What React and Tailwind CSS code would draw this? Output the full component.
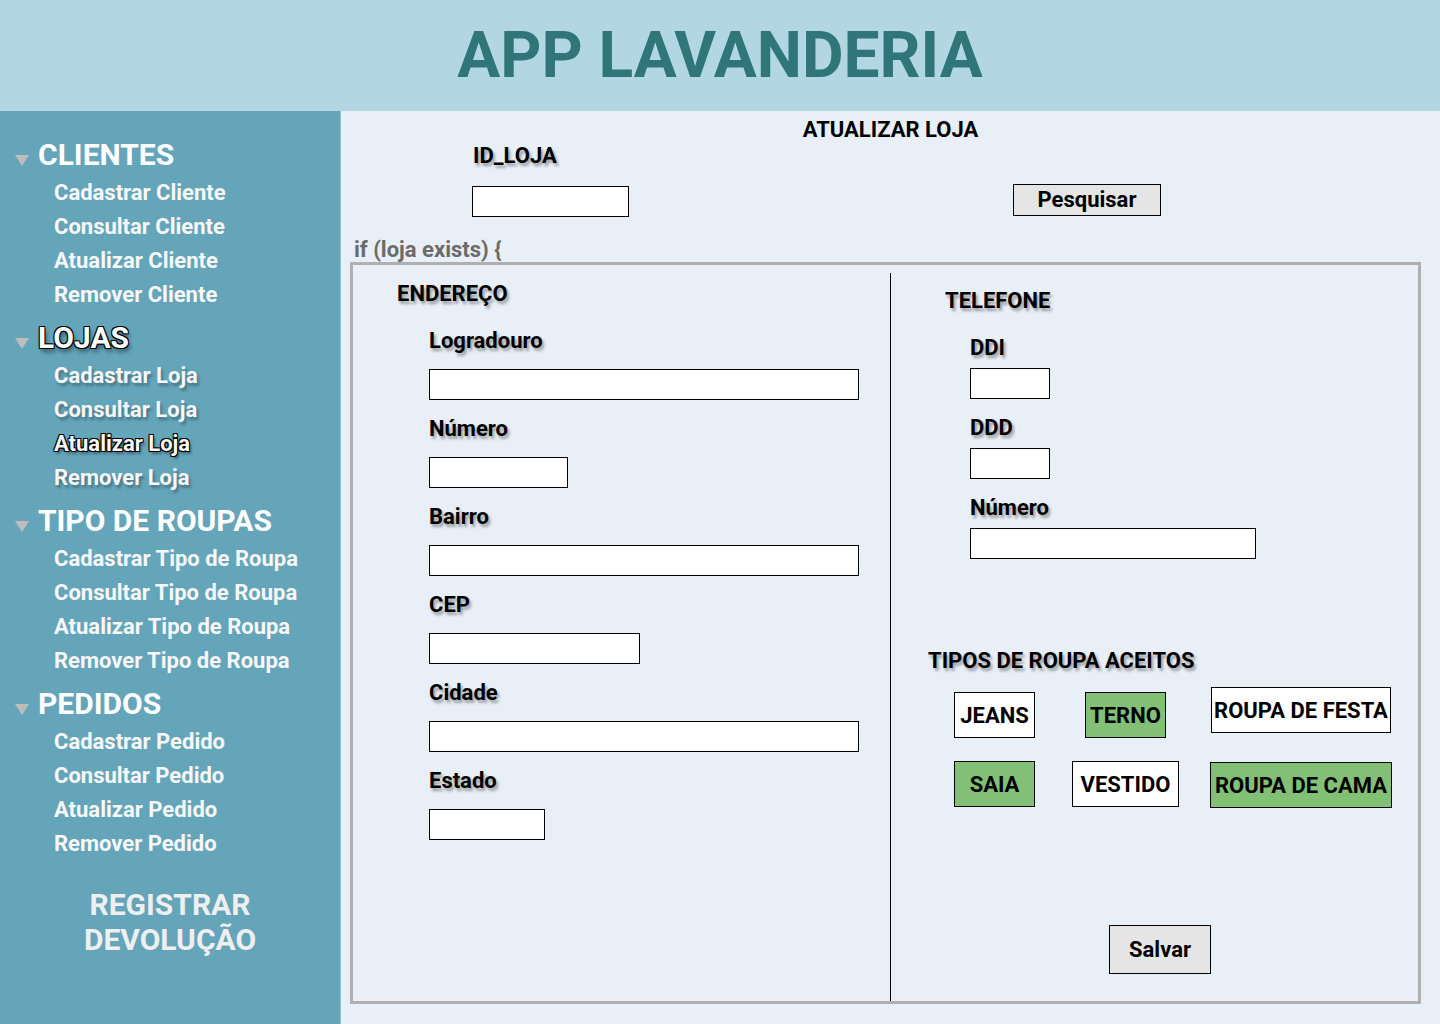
import React from "react";

const SHADOW = "[text-shadow:2px_3px_3px_rgba(0,0,0,0.35)]";

const menu = [
  {
    title: "CLIENTES",
    items: ["Cadastrar Cliente", "Consultar Cliente", "Atualizar Cliente", "Remover Cliente"],
  },
  {
    title: "LOJAS",
    items: ["Cadastrar Loja", "Consultar Loja", "Atualizar Loja", "Remover Loja"],
    active: "Atualizar Loja",
  },
  {
    title: "TIPO DE ROUPAS",
    items: ["Cadastrar Tipo de Roupa", "Consultar Tipo de Roupa", "Atualizar Tipo de Roupa", "Remover Tipo de Roupa"],
  },
  {
    title: "PEDIDOS",
    items: ["Cadastrar Pedido", "Consultar Pedido", "Atualizar Pedido", "Remover Pedido"],
  },
];

const enderecoFields = [
  { label: "Logradouro", width: "w-[430px]" },
  { label: "Número", width: "w-[139px]" },
  { label: "Bairro", width: "w-[430px]" },
  { label: "CEP", width: "w-[211px]" },
  { label: "Cidade", width: "w-[430px]" },
  { label: "Estado", width: "w-[116px]" },
];

function Triangle() {
  return (
    <svg width="14" height="11" viewBox="0 0 14 11" className="mt-[10px] shrink-0">
      <polygon points="0,0 14,0 7,11" fill="#bdbdbd" />
    </svg>
  );
}

function Sidebar() {
  return (
    <aside className="w-[340px] bg-[#64a5ba] pt-[27px] flex flex-col">
      {menu.map((section) => {
        const isLojas = section.title === "LOJAS";
        return (
          <div key={section.title} className="mb-[9px]">
            <div className="flex items-center pl-[15px] gap-[9px] mb-[4px]">
              <Triangle />
              <span
                className={
                  "text-[30px] leading-[34px] font-bold text-white " +
                  (isLojas
                    ? "[text-shadow:1px_1px_0_#000,-1px_1px_0_#000,1px_-1px_0_#000,-1px_-1px_0_#000,2px_4px_4px_rgba(0,0,0,0.45)]"
                    : "")
                }
              >
                {section.title}
              </span>
            </div>
            <ul className="pl-[54px]">
              {section.items.map((item) => (
                <li
                  key={item}
                  className={
                    "text-[22px] leading-[34px] font-bold text-[#f7f7f7] " +
                    (section.active === item
                      ? "[text-shadow:1px_1px_0_#000,-1px_1px_0_#000,1px_-1px_0_#000,-1px_-1px_0_#000,2px_3px_3px_rgba(0,0,0,0.4)]"
                      : isLojas
                      ? "[text-shadow:2px_3px_3px_rgba(0,0,0,0.3)]"
                      : "")
                  }
                >
                  {item}
                </li>
              ))}
            </ul>
          </div>
        );
      })}
      <div className="mt-[17px] text-center text-[30px] leading-[35px] font-bold text-[#efefef]">
        REGISTRAR
        <br />
        DEVOLUÇÃO
      </div>
    </aside>
  );
}

function Field({ label, width, gap = "mt-[16px]" }) {
  return (
    <div className="flex flex-col">
      <span className={`text-[22px] leading-[24px] font-bold text-black ${SHADOW}`}>{label}</span>
      <div className={`${gap} ${width} h-[31px] bg-white border border-black`} />
    </div>
  );
}

function Chip({ label, green, className = "" }) {
  return (
    <div
      className={
        "h-[46px] flex items-center justify-center border border-black text-[22px] font-bold text-black " +
        (green ? "bg-[#82c076] " : "bg-white ") +
        className
      }
    >
      {label}
    </div>
  );
}

function MainPanel() {
  return (
    <main className="flex-1 bg-[#e8eff6] border-l border-[#8fc6d4] flex flex-col">
      <h2 className="pt-[7px] text-center text-[22px] leading-[24px] font-bold text-black">ATUALIZAR LOJA</h2>
      <div className="flex items-end pl-[131px] pt-[2px]">
        <div className="flex flex-col">
          <span className={`pl-[1px] text-[22px] leading-[24px] font-bold text-black ${SHADOW}`}>ID_LOJA</span>
          <div className="mt-[18px] w-[157px] h-[31px] bg-white border border-black" />
        </div>
        <button className="ml-[384px] mb-[1px] w-[148px] h-[32px] bg-[#e5e5e5] border border-black text-[22px] font-bold text-black leading-none">
          Pesquisar
        </button>
      </div>
      <p className="mt-[21px] pl-[13px] text-[22px] leading-[24px] font-bold text-[#6b6b6b]">if (loja exists) {"{"}</p>
      <section className="ml-[9px] w-[1071px] h-[742px] border-[3px] border-[#b0b0b0] flex">
        <div className="w-[537px] pl-[44px] pt-[17px] flex flex-col">
          <span className={`text-[22px] leading-[24px] font-bold text-black ${SHADOW}`}>ENDEREÇO</span>
          <div className="ml-[32px] mt-[23px] flex flex-col gap-[17px]">
            {enderecoFields.map((f) => (
              <Field key={f.label} label={f.label} width={f.width} />
            ))}
          </div>
        </div>
        <div className="mt-[8px] w-px bg-black" />
        <div className="flex-1 pl-[54px] pt-[24px] flex flex-col">
          <span className={`text-[22px] leading-[24px] font-bold text-black ${SHADOW}`}>TELEFONE</span>
          <div className="ml-[25px] mt-[23px] flex flex-col gap-[17px]">
            <Field label="DDI" width="w-[80px]" gap="mt-[8px]" />
            <Field label="DDD" width="w-[80px]" gap="mt-[8px]" />
            <Field label="Número" width="w-[286px]" gap="mt-[8px]" />
          </div>
          <span className={`-ml-[17px] mt-[90px] text-[22px] leading-[24px] font-bold text-black ${SHADOW}`}>
            TIPOS DE ROUPA ACEITOS
          </span>
          <div className="mt-[14px] flex items-start">
            <Chip label="JEANS" className="mt-[5px] w-[81px] ml-[9px]" />
            <Chip label="TERNO" green className="mt-[5px] w-[81px] ml-[50px]" />
            <Chip label="ROUPA DE FESTA" className="w-[180px] ml-[45px]" />
          </div>
          <div className="mt-[23px] flex items-start">
            <Chip label="SAIA" green className="w-[81px] ml-[9px]" />
            <Chip label="VESTIDO" className="w-[107px] ml-[37px]" />
            <Chip label="ROUPA DE CAMA" green className="mt-[1px] w-[182px] ml-[31px]" />
          </div>
          <button className="mt-[117px] ml-[164px] w-[102px] h-[49px] bg-[#e5e5e5] border border-black text-[22px] font-bold text-black">
            Salvar
          </button>
        </div>
      </section>
    </main>
  );
}

export default function App() {
  return (
    <div className="w-[1440px] h-[1024px] flex flex-col overflow-hidden font-['Roboto',sans-serif]">
      <header className="h-[111px] bg-[#b2d7e2] flex items-center justify-center">
        <h1 className="text-[64px] leading-none font-bold text-[#2f7579]">APP LAVANDERIA</h1>
      </header>
      <div className="flex flex-1">
        <Sidebar />
        <MainPanel />
      </div>
    </div>
  );
}
